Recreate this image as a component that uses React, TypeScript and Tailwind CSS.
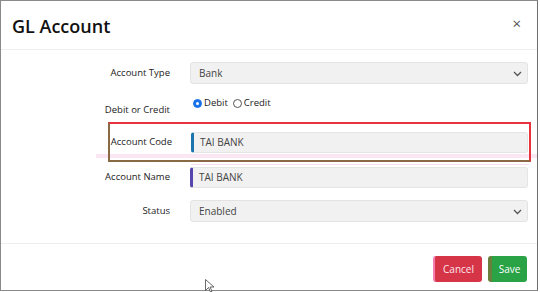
import React from "react";

const Chevron = () => (
  <svg width="9" height="6" viewBox="0 0 9 6" className="absolute right-[5px] top-[8px]">
    <path d="M1 1l3.5 3.5L8 1" fill="none" stroke="#555" strokeWidth="1.3" />
  </svg>
);

export default function App() {
  return (
    <div
      className="relative w-[540px] h-[292px] bg-white overflow-hidden"
      style={{ fontFamily: '"Open Sans", "Noto Sans", sans-serif' }}
    >
      <div className="w-[538px] h-[291px] border border-[#8a8a8a] border-r-[#6e6e6e] flex flex-col">
        {/* header */}
        <div className="h-[49px] border-b border-[#eceef0] flex items-center justify-between pl-[11px] pr-[16px] shrink-0">
          <div className="text-[18px] font-semibold text-[#111] leading-none mt-[2px]">GL Account</div>
          <div className="text-[15px] text-[#555] leading-none mt-[-3px]">×</div>
        </div>
        {/* body */}
        <div className="relative flex-1 flex flex-col text-[9.5px] text-[#222]">
          <div className="flex items-center mt-[12px] h-[22px]">
            <div className="w-[171px] text-right pr-[2px] whitespace-nowrap">Account Type</div>
            <div className="relative ml-[18px] w-[338px] h-[22px] bg-[#f1f1f1] border border-[#e3e3e3] rounded-[3px] flex items-center pl-[8px] text-[10px] text-[#444]">
              Bank
              <Chevron />
            </div>
          </div>
          <div className="flex items-start mt-[13px] h-[22px]">
            <div className="w-[171px] text-right pr-[2px] mt-[6px] whitespace-nowrap">Debit or Credit</div>
            <div className="ml-[21px] flex items-center gap-[2px] mt-[-1px]">
              <span className="w-[9px] h-[9px] rounded-full bg-[#1a73e8] border border-[#1a73e8] flex items-center justify-center">
                <span className="w-[3px] h-[3px] rounded-full bg-white" />
              </span>
              <span className="text-[9.5px] text-[#222]">Debit</span>
              <span className="ml-[3px] w-[9px] h-[9px] rounded-full border border-[#555] bg-white" />
              <span className="text-[9.5px] text-[#222]">Credit</span>
            </div>
          </div>
          {/* pink band */}
          <div className="absolute left-[95px] right-0 top-[104px] h-[4px] bg-[#fbe6f4]" />
          <div className="absolute left-[190px] w-[338px] top-[114px] h-[1px] bg-[#f6dff0]" />
          <div className="relative ml-[107px] mt-[3px] w-[423px] h-[40px] border-2 border-[#e8323f] border-b-[#8a6a45] border-l-[#8a6a45] flex items-center">
            <div className="w-[62px] text-right whitespace-nowrap">Account Code</div>
            <div className="ml-[19px] w-[337px] h-[21px] bg-[#f1f1f1] border border-[#e5e5e5] border-l-[3px] border-l-[#1b74ad] rounded-[3px] flex items-center pl-[6px] text-[10px] text-[#444]">
              TAI BANK
            </div>
          </div>
          <div className="flex items-center mt-[5px] h-[21px]">
            <div className="w-[171px] text-right pr-[2px] whitespace-nowrap">Account Name</div>
            <div className="ml-[18px] w-[338px] h-[21px] bg-[#f1f1f1] border border-[#e5e5e5] border-l-[3px] border-l-[#5546ad] rounded-[3px] flex items-center pl-[6px] text-[10px] text-[#444]">
              TAI BANK
            </div>
          </div>
          <div className="flex items-center mt-[12px] h-[22px]">
            <div className="w-[171px] text-right pr-[2px]">Status</div>
            <div className="relative ml-[18px] w-[338px] h-[22px] bg-[#f1f1f1] border border-[#e3e3e3] rounded-[3px] flex items-center pl-[8px] text-[10px] text-[#444]">
              Enabled
              <Chevron />
            </div>
          </div>
        </div>
        {/* footer */}
        <div className="h-[47px] border-t border-[#eceef0] flex items-start justify-end pr-[10px] pt-[12px] gap-[6px] shrink-0">
          <div className="w-[49px] h-[26px] rounded-[3px] bg-[#d63447] border-l-2 border-l-[#f47fb0] text-[#fde8ee] text-[10px] flex items-center justify-center">
            Cancel
          </div>
          <div className="w-[39px] h-[26px] rounded-[3px] bg-[#2aa347] border-l-[4px] border-l-[#6b7f3c] text-white text-[10px] flex items-center justify-center">
            Save
          </div>
        </div>
      </div>
      {/* cursor */}
      <svg className="absolute left-[205px] top-[279px]" width="10" height="14" viewBox="0 0 10 14">
        <path d="M0.5 0.5v11l3-3 2 4.5 1.5-0.7-2-4.3h4z" fill="white" stroke="#444" strokeWidth="0.8" />
      </svg>
    </div>
  );
}
